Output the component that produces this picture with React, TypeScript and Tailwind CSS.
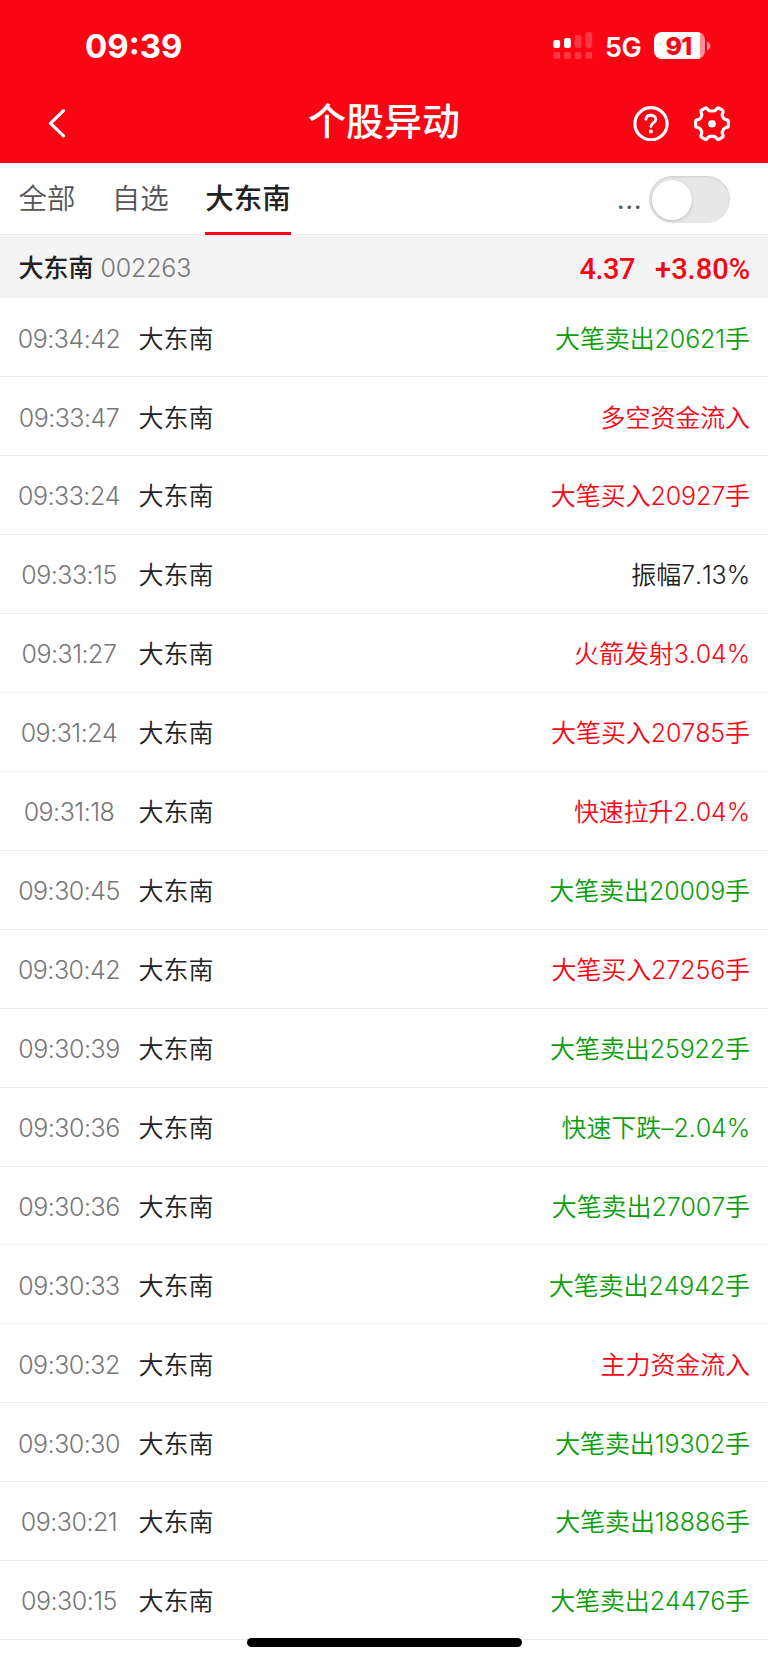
type Tone = 'up' | 'down' | 'flat'

const tones: Record<Tone, string> = {
  up: 'text-[#fa0513]',
  down: 'text-[#0a9d0a]',
  flat: 'text-[#222222]',
}

const events: { time: string; text: string; tone: Tone }[] = [
  { time: '09:34:42', text: '大笔卖出20621手', tone: 'down' },
  { time: '09:33:47', text: '多空资金流入', tone: 'up' },
  { time: '09:33:24', text: '大笔买入20927手', tone: 'up' },
  { time: '09:33:15', text: '振幅7.13%', tone: 'flat' },
  { time: '09:31:27', text: '火箭发射3.04%', tone: 'up' },
  { time: '09:31:24', text: '大笔买入20785手', tone: 'up' },
  { time: '09:31:18', text: '快速拉升2.04%', tone: 'up' },
  { time: '09:30:45', text: '大笔卖出20009手', tone: 'down' },
  { time: '09:30:42', text: '大笔买入27256手', tone: 'up' },
  { time: '09:30:39', text: '大笔卖出25922手', tone: 'down' },
  { time: '09:30:36', text: '快速下跌–2.04%', tone: 'down' },
  { time: '09:30:36', text: '大笔卖出27007手', tone: 'down' },
  { time: '09:30:33', text: '大笔卖出24942手', tone: 'down' },
  { time: '09:30:32', text: '主力资金流入', tone: 'up' },
  { time: '09:30:30', text: '大笔卖出19302手', tone: 'down' },
  { time: '09:30:21', text: '大笔卖出18886手', tone: 'down' },
  { time: '09:30:15', text: '大笔卖出24476手', tone: 'down' },
]

function SignalIcon() {
  return (
    <svg width="40" height="28" viewBox="0 0 40 28" fill="#fff">
      <rect x="0.3" y="8" width="6.8" height="8" rx="2" />
      <rect x="11" y="6" width="6.8" height="10" rx="2" />
      <g fillOpacity="0.2">
        <rect x="21.7" y="3" width="6.8" height="13" rx="2" />
        <rect x="32.4" y="0" width="6.8" height="16" rx="2" />
        <rect x="0.3" y="20" width="6.8" height="7" rx="2" />
        <rect x="11" y="20" width="6.8" height="7" rx="2" />
        <rect x="21.7" y="20" width="6.8" height="7" rx="2" />
        <rect x="32.4" y="20" width="6.8" height="7" rx="2" />
      </g>
    </svg>
  )
}

function Battery() {
  return (
    <div className="flex items-center">
      <div className="flex h-[27px] w-[51px] items-center justify-center rounded-[8px] bg-[linear-gradient(90deg,#fff_46px,rgba(255,255,255,0.55)_46px)] pt-[1px] pr-[2px] text-[25px] leading-[27px] font-extrabold tracking-[-0.7px] text-[#fa0513]">
        91
      </div>
      <svg className="ml-[2px]" width="4" height="10" viewBox="0 0 4 10">
        <path d="M0 0.5C2 1.5 3.4 3 3.4 5S2 8.5 0 9.5Z" fill="#fff" fillOpacity="0.55" />
      </svg>
    </div>
  )
}

function StatusBar() {
  return (
    <div className="flex h-[92px] items-start pt-[32px] pr-[57px] pl-[85px] text-white">
      <div className="text-[33px] leading-[28px] font-bold">09:39</div>
      <div className="ml-auto flex items-start">
        <SignalIcon />
        <div className="ml-[12px] w-[42px] text-[27px] leading-[31px] font-semibold tracking-[-0.5px]">5G</div>
        <div className="ml-[7px]">
          <Battery />
        </div>
      </div>
    </div>
  )
}

function NavBar() {
  return (
    <div className="grid h-[71px] grid-cols-[1fr_auto_1fr] items-start text-white">
      <svg className="mt-[16px] ml-[46px]" width="22" height="30" viewBox="0 0 22 30" fill="none">
        <path d="M17.5 2.6L4.5 15.3L17.5 27.8" stroke="#fff" strokeWidth="3.2" strokeLinecap="round" strokeLinejoin="round" />
      </svg>
      <h1 className="text-[38px] leading-[59px] font-medium">个股异动</h1>
      <div className="mt-[13px] mr-[38.5px] flex justify-end gap-[25px]">
        <svg width="36" height="36" viewBox="0 0 36 36" fill="none" stroke="#fff" strokeLinecap="round">
          <circle cx="18" cy="18.7" r="16.1" strokeWidth="3.2" />
          <path d="M12.9 14.4C13 11.8 15.1 10.2 17.9 10.2C20.7 10.2 22.8 12 22.8 14.4C22.8 17.4 18 18 18 21.6" strokeWidth="2.9" />
          <circle cx="17.9" cy="26.4" r="2" fill="#fff" stroke="none" />
        </svg>
        <svg width="36" height="36" viewBox="0 0 36 36" fill="none">
          <path
            d="M10.8 3.3Q12 2.6 13 3.6L14.2 5Q15 6 16.3 6H19.7Q21 6 21.8 5L23 3.6Q24 2.6 25.2 3.3L28.2 5Q29.4 5.8 29 7.1L28.4 9Q28 10.3 28.6 11.4L29.6 13.2Q30.3 14.3 31.6 14.6L33 14.9Q34.4 15.2 34.4 16.6V20.8Q34.4 22.2 33 22.5L31.6 22.8Q30.3 23.1 29.6 24.2L28.6 26Q28 27.1 28.4 28.4L29 30.3Q29.4 31.6 28.2 32.4L25.2 34.1Q24 34.8 23 33.8L21.8 32.4Q21 31.4 19.7 31.4H16.3Q15 31.4 14.2 32.4L13 33.8Q12 34.8 10.8 34.1L7.8 32.4Q6.6 31.6 7 30.3L7.6 28.4Q8 27.1 7.4 26L6.4 24.2Q5.7 23.1 4.4 22.8L3 22.5Q1.6 22.2 1.6 20.8V16.6Q1.6 15.2 3 14.9L4.4 14.6Q5.7 14.3 6.4 13.2L7.4 11.4Q8 10.3 7.6 9L7 7.1Q6.6 5.8 7.8 5Z"
            stroke="#fff"
            strokeWidth="3.2"
            strokeLinejoin="round"
          />
          <circle cx="18" cy="18.7" r="3.8" fill="#fff" />
        </svg>
      </div>
    </div>
  )
}

function Tabs() {
  return (
    <div className="flex h-[72px] items-start border-b border-[#ebebeb] bg-white pr-[38.5px] pl-[18.5px] text-[28.5px] text-[#555555]">
      <div className="flex gap-[36.3px]">
        <div className="leading-[71px] font-[350]">全部</div>
        <div className="leading-[71px] font-[350]">自选</div>
        <div className="h-[72px] border-b-[3px] border-[#fa0513] leading-[71px] font-medium text-[#222222]">大东南</div>
      </div>
      <div className="ml-auto flex items-start">
        <div className="text-[26px] leading-[74px] tracking-[1px]">...</div>
        <div className="mt-[13px] ml-[6px] h-[47px] w-[81px] rounded-full bg-[#e7e7e7] p-[3.5px] shadow-[inset_0_1px_2px_rgba(0,0,0,0.12)]">
          <div className="size-[40px] rounded-full bg-white shadow-[0_1px_3px_rgba(0,0,0,0.22)]" />
        </div>
      </div>
    </div>
  )
}

export default function App() {
  return (
    <div className="relative h-[1662px] w-[768px] overflow-hidden bg-white font-['Inter','Noto_Sans_CJK_SC',sans-serif]">
      <header className="bg-[#fa0513]">
        <StatusBar />
        <NavBar />
      </header>
      <Tabs />

      <div className="flex h-[63.4px] items-center bg-[#f4f4f4] pt-[4px] pr-[18px] pl-[18.5px]">
        <span className="text-[25px] font-medium text-[#222222]">大东南</span>
        <span className="ml-[7px] text-[25px] font-[350] tracking-[-0.2px] text-[#777777]">002263</span>
        <span className="ml-auto pt-[3px] font-[Roboto] text-[29px] font-medium tracking-[-0.5px] text-[#fa0513]">4.37</span>
        <span className="ml-[20px] pt-[3px] font-[Roboto] text-[29px] font-medium text-[#fa0513]">+3.80%</span>
      </div>

      <ul>
        {events.map((event, i) => (
          <li
            key={i}
            className="flex h-[78.93px] items-center border-b border-[#ececec] pt-[4px] pr-[18px] pl-[17.5px] text-[25px] font-[350] [font-kerning:none]"
          >
            <span className="w-[103px] text-center tracking-[-0.5px] text-[#777777]">{event.time}</span>
            <span className="ml-[18px] text-[#222222]">大东南</span>
            <span className={`ml-auto tracking-[-0.1px] ${tones[event.tone]}`}>{event.text}</span>
          </li>
        ))}
      </ul>

      <div className="absolute bottom-[15px] left-[247px] h-[9px] w-[275px] rounded-full bg-black" />
    </div>
  )
}
